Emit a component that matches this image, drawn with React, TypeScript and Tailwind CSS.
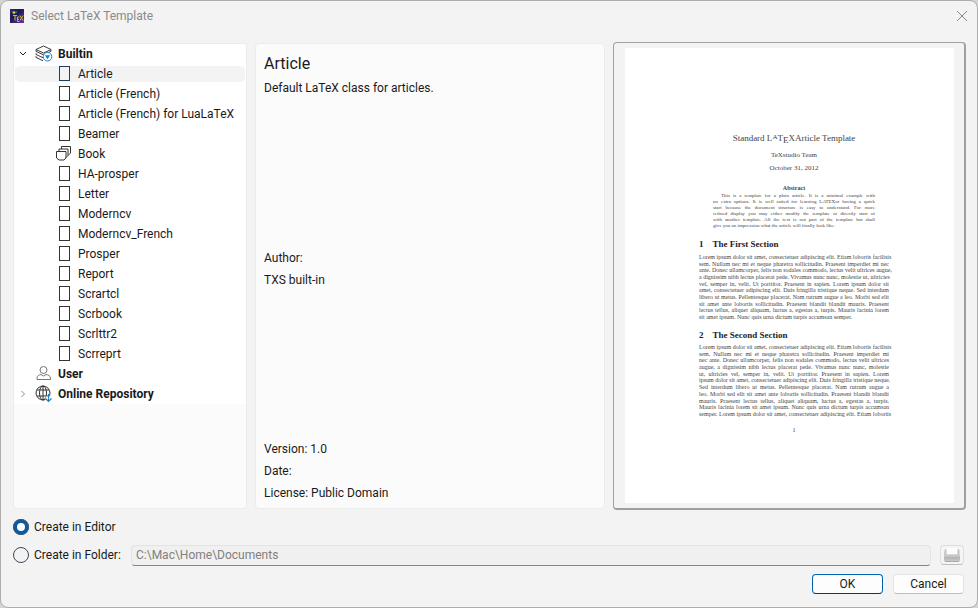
import React from "react";

const templates = [
  "Article", "Article (French)", "Article (French) for LuaLaTeX", "Beamer", "Book",
  "HA-prosper", "Letter", "Moderncv", "Moderncv_French", "Prosper", "Report",
  "Scrartcl", "Scrbook", "Scrlttr2", "Scrreprt",
];

const abstractLines = [
  "This is a template for a plain article. It is a minimal example with",
  "no extra options. It is well suited for learning LATEXor having a quick",
  "start because the document structure is easy to understand. For more",
  "refined display you may either modify the template or directly start of",
  "with another template. All the text is not part of the template but shall",
  "give you an impression what the article will finally look like.",
];

const firstLines = [
  "Lorem ipsum dolor sit amet, consectetuer adipiscing elit. Etiam lobortis facilisis",
  "sem. Nullam nec mi et neque pharetra sollicitudin. Praesent imperdiet mi nec",
  "ante. Donec ullamcorper, felis non sodales commodo, lectus velit ultrices augue,",
  "a dignissim nibh lectus placerat pede. Vivamus nunc nunc, molestie ut, ultricies",
  "vel, semper in, velit. Ut porttitor. Praesent in sapien. Lorem ipsum dolor sit",
  "amet, consectetuer adipiscing elit. Duis fringilla tristique neque. Sed interdum",
  "libero ut metus. Pellentesque placerat. Nam rutrum augue a leo. Morbi sed elit",
  "sit amet ante lobortis sollicitudin. Praesent blandit blandit mauris. Praesent",
  "lectus tellus, aliquet aliquam, luctus a, egestas a, turpis. Mauris lacinia lorem",
  "sit amet ipsum. Nunc quis urna dictum turpis accumsan semper.",
];

const secondLines = [
  "Lorem ipsum dolor sit amet, consectetuer adipiscing elit. Etiam lobortis facilisis",
  "sem. Nullam nec mi et neque pharetra sollicitudin. Praesent imperdiet mi",
  "nec ante. Donec ullamcorper, felis non sodales commodo, lectus velit ultrices",
  "augue, a dignissim nibh lectus placerat pede. Vivamus nunc nunc, molestie",
  "ut, ultricies vel, semper in, velit. Ut porttitor. Praesent in sapien. Lorem",
  "ipsum dolor sit amet, consectetuer adipiscing elit. Duis fringilla tristique neque.",
  "Sed interdum libero ut metus. Pellentesque placerat. Nam rutrum augue a",
  "leo. Morbi sed elit sit amet ante lobortis sollicitudin. Praesent blandit blandit",
  "mauris. Praesent lectus tellus, aliquet aliquam, luctus a, egestas a, turpis.",
  "Mauris lacinia lorem sit amet ipsum. Nunc quis urna dictum turpis accumsan",
  "semper. Lorem ipsum dolor sit amet, consectetuer adipiscing elit. Etiam lobortis",
];

function AppIcon() {
  return (
    <svg width="14" height="14" viewBox="0 0 14 14" aria-hidden="true">
      <defs>
        <linearGradient id="night" x1="0" y1="0" x2="1" y2="1">
          <stop offset="0" stopColor="#3a1f78" />
          <stop offset="0.4" stopColor="#1c1a50" />
          <stop offset="1" stopColor="#6a35a8" />
        </linearGradient>
      </defs>
      <rect width="14" height="14" fill="url(#night)" />
      <path d="M1 2l3 1 3-1v2l-4 1z" fill="#2d6a5a" />
      <circle cx="4" cy="3.500" r="1.200" fill="#d5dc3c" />
      <path d="M3 6.500h4M5 6.500v5M7.400 8v4.500M7.400 8h2M7.400 10.200h1.600M7.400 12.500h2M10 6.500l3 5M13 6.500l-3 5" stroke="#cdb83f" strokeWidth="1" fill="none" />
    </svg>
  );
}

function StackIcon() {
  return (
    <svg width="18" height="18" viewBox="0 0 18 18" fill="none" aria-hidden="true">
      <g stroke="#3a3a3a" strokeWidth="1" strokeLinejoin="round">
        <path d="M1 4.500L8.500 1l7.500 3.500L8.500 8z" />
        <path d="M1 4.500v1.800l7.500 3.600L16 6.300V4.500" />
        <path d="M1 8.200v1.200L8 12.800l2-.9" />
        <path d="M1 11.200v1.200l7 3.400" />
      </g>
      <circle cx="12.500" cy="11.700" r="4.300" fill="#fff" stroke="#1b84cc" />
      <path d="M9.800 10.200h5.400l-2.700 4z" fill="#1b84cc" />
    </svg>
  );
}

function PageIcon({ active }: { active: boolean }) {
  return (
    <svg width="16" height="18" viewBox="0 0 16 18" fill="none" aria-hidden="true">
      <rect x="3.500" y="1.500" width="10" height="14" stroke={active ? "#1f3f5c" : "#333"} />
    </svg>
  );
}

function BookIcon() {
  return (
    <svg width="16" height="18" viewBox="0 0 16 18" fill="none" stroke="#333" strokeLinejoin="round" aria-hidden="true">
      <path d="M.5 6.500h9.500v6.500l-2 2h-5l-2.500-2z" />
      <path d="M3 6V4h9v6.500l-2 2" />
      <path d="M5.500 4V1.500h9V8l-2.500 2.500" />
    </svg>
  );
}

function UserIcon() {
  return (
    <svg width="18" height="18" viewBox="0 0 18 18" fill="none" stroke="#777" aria-hidden="true">
      <circle cx="8.500" cy="5" r="3.500" />
      <path d="M2 14.500v-1.500c0-2 2-3.200 4-3.500l2.500 1.500L11 9.500c2 .3 4.500 1.500 4.500 3.500v1.500z" strokeLinejoin="round" />
    </svg>
  );
}

function GlobeIcon() {
  return (
    <svg width="18" height="18" viewBox="0 0 18 18" fill="none" aria-hidden="true">
      <g stroke="#333">
        <circle cx="8" cy="8" r="7" />
        <ellipse cx="8" cy="8" rx="3.500" ry="7" />
        <path d="M8 1v14M2 5h12M2 11h12" />
      </g>
      <path d="M10.500 11.500h5.500v6h-5.500z" fill="#fff" />
      <path d="M13.500 9v8M10.500 13.500l3 3 3-3" stroke="#1b84cc" strokeWidth="1.200" />
    </svg>
  );
}

function PrinterIcon() {
  return (
    <svg width="18" height="16" viewBox="0 0 18 16" aria-hidden="true">
      <defs>
        <linearGradient id="drive" x1="0" y1="0" x2="0" y2="1">
          <stop offset="0" stopColor="#d2d2d2" />
          <stop offset="0.5" stopColor="#b4b4b4" />
          <stop offset="1" stopColor="#cfcfcf" />
        </linearGradient>
      </defs>
      <path d="M1.500 2.500h2v5h11v-5h2v5l.5 1H1z" fill="#c4c4c4" />
      <path d="M4 1h10v6H4z" fill="#fdfdfd" />
      <rect x="1" y="7.500" width="16" height="7" rx="1" fill="url(#drive)" />
      <path d="M2 14.500h14" stroke="#aaa" />
    </svg>
  );
}

function Chevron({ open }: { open: boolean }) {
  return (
    <svg width="10" height="10" viewBox="0 0 10 10" fill="none" aria-hidden="true">
      {open ? <path d="M2 3l3 3 3-3" stroke="#222" /> : <path d="M3.500 2l3 3-3 3" stroke="#888" />}
    </svg>
  );
}

function Lines({ lines, indent = false, ragged = false }: { lines: string[]; indent?: boolean; ragged?: boolean }) {
  return (
    <>
      {lines.map((line, i) => {
        const last = ragged && i === lines.length - 1;
        return (
          <div
            key={i}
            className={`h-[6px] whitespace-nowrap text-justify leading-[6px] ${last ? "[text-align-last:left]" : "[text-align-last:justify]"} ${indent && i === 0 ? "pl-2" : ""}`}
          >
            {line}
          </div>
        );
      })}
    </>
  );
}

function SectionTitle({ number, title }: { number: number; title: string }) {
  return (
    <h3 className="mt-[9px] flex gap-[9px] text-[9px] font-bold leading-[12px] text-[#222]">
      <span>{number}</span>
      {title}
    </h3>
  );
}

function Preview() {
  return (
    <article className="flex h-full flex-col items-center bg-white pt-[83px] pl-[9px] font-['Liberation_Serif',serif] text-[#444]">
      <h2 className="text-[9px] leading-[14px]">
        Standard L<sup className="top-[-2px] text-[7px] leading-none">A</sup>T<sub className="bottom-[-2px] text-[9px] leading-none">E</sub>XArticle Template
      </h2>
      <p className="mt-[4px] text-[7px] leading-[12px]">TeXstudio Team</p>
      <p className="text-[7px] leading-[14px]">October 31, 2012</p>
      <h3 className="mt-[9px] text-[6px] font-bold leading-[8px]">Abstract</h3>
      <div className="mt-[1px] w-[162px] text-[5px]">
        <Lines lines={abstractLines} indent ragged />
      </div>
      <div className="w-[190px]">
        <SectionTitle number={1} title="The First Section" />
        <div className="mt-[4px] flex h-[66px] flex-col justify-between text-[6px]">
          <Lines lines={firstLines} ragged />
        </div>
        <SectionTitle number={2} title="The Second Section" />
        <div className="mt-[3px] flex h-[73px] flex-col justify-between text-[6px]">
          <Lines lines={secondLines} />
        </div>
      </div>
      <p className="mt-[9px] text-[6px] leading-[8px]">1</p>
    </article>
  );
}

export default function App() {
  return (
    <div className="min-h-screen bg-[#d4d4d4] font-['Roboto','Noto_Sans',sans-serif] text-[12px] leading-[20px] text-[#1a1a1a]">
      <main className="flex min-h-screen flex-col rounded-[8px] border border-[#adadad] bg-[#f3f3f3] pb-[13px] pl-3 pr-[11px]">
        <header className="flex h-[29px] items-center justify-between">
          <div className="-ml-[3px] flex items-center gap-[7px] text-[#8a8a8a]">
            <AppIcon />
            <h1>Select LaTeX Template</h1>
          </div>
          <button aria-label="Close" className="-mr-[3px] p-px">
            <svg width="12" height="12" viewBox="0 0 12 12" stroke="#888" aria-hidden="true">
              <path d="M1 1l10 10M11 1L1 11" />
            </svg>
          </button>
        </header>

        <section className="mt-[12px] flex h-[468px] gap-2">
          <nav aria-label="Templates" className="my-px w-[234px] overflow-hidden rounded-[4px] border border-[#ececec] bg-[#fbfbfb]">
            <ul className="bg-white">
              <li>
                <div className="flex h-5 items-center pl-1 font-bold">
                  <Chevron open />
                  <span className="ml-[7px] mr-[5px]"><StackIcon /></span>
                  Builtin
                </div>
                <ul className="px-px">
                  {templates.map((name) => (
                    <li
                      key={name}
                      className={`flex h-5 items-center gap-[6px] pl-[41px] ${name === "Article" ? "rounded-[6px] border-y-2 border-white bg-[#f3f3f3]" : ""}`}
                    >
                      {name === "Book" ? <BookIcon /> : <PageIcon active={name === "Article"} />}
                      {name}
                    </li>
                  ))}
                </ul>
              </li>
              <li className="flex h-5 items-center pl-[21px] font-bold">
                <span className="mr-[5px]"><UserIcon /></span>
                User
              </li>
              <li className="flex h-5 items-center pl-1 font-bold">
                <Chevron open={false} />
                <span className="ml-[7px] mr-[5px]"><GlobeIcon /></span>
                Online Repository
              </li>
            </ul>
          </nav>

          <div className="my-px flex flex-1 flex-col justify-between rounded-[4px] border border-[#ececec] bg-[#fbfbfb] px-2 pt-[7px] pb-1 leading-[22px]">
            <div>
              <h2 className="text-[16px] leading-[26px]">Article</h2>
              <p>Default LaTeX class for articles.</p>
            </div>
            <div>
              <p>Author:</p>
              <p>TXS built-in</p>
            </div>
            <div>
              <p>Version: 1.0</p>
              <p>Date:</p>
              <p>License: Public Domain</p>
            </div>
          </div>

          <div className="w-[353px] rounded-[4px] border border-r-2 border-b-2 border-[#a0a0a0] py-[5px] pl-[11px] pr-[10px]">
            <Preview />
          </div>
        </section>

        <form className="flex flex-col pr-[2px]" onSubmit={(e) => e.preventDefault()}>
          <label className="mt-[5px] flex h-6 items-center gap-[5px] self-start">
            <input
              type="radio"
              name="target"
              defaultChecked
              className="size-4 shrink-0 appearance-none rounded-full border border-[#3c4a58] checked:border-4 checked:border-[#0a5ba5] checked:bg-white checked:outline checked:-outline-offset-1 checked:outline-[#45586c]"
            />
            Create in Editor
          </label>
          <div className="mt-[4px] flex h-6 items-center">
            <label className="flex w-[107px] items-center gap-[5px] whitespace-nowrap">
              <input
                type="radio"
                name="target"
                className="size-4 shrink-0 appearance-none rounded-full border border-[#3c4a58] checked:border-4 checked:border-[#0a5ba5] checked:bg-white checked:outline checked:-outline-offset-1 checked:outline-[#45586c]"
              />
              Create in Folder:
            </label>
            <input
              type="text"
              aria-label="Folder"
              disabled
              defaultValue="C:\Mac\Home\Documents"
              className="ml-[11px] h-[21px] min-w-0 flex-1 rounded-[4px] border border-[#e3e3e3] border-b-[#868686] bg-[#f0f0f0] px-1 text-[#808080]"
            />
            <button
              type="button"
              aria-label="Browse folder"
              className="ml-[9px] flex h-5 w-6 items-center justify-center rounded-[4px] border border-[#dedede] border-b-[#bdbdbd] bg-[#f5f5f5]"
            >
              <PrinterIcon />
            </button>
          </div>
          <div className="mt-[7px] flex justify-end gap-[10px]">
            <button type="submit" className="flex h-5 w-[71px] items-center justify-center rounded-[4px] border border-[#0063b1] border-b-[#00396b] bg-[#fdfdfd]">
              OK
            </button>
            <button type="button" className="flex h-5 w-[71px] items-center justify-center rounded-[4px] border border-[#e4e4e4] border-b-[#bdbdbd] bg-[#fdfdfd]">
              Cancel
            </button>
          </div>
        </form>
      </main>
    </div>
  );
}
